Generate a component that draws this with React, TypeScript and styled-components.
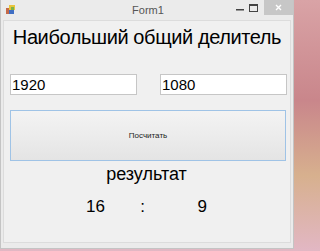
import styled, { createGlobalStyle } from "styled-components";

const GlobalStyle = createGlobalStyle`
  html, body {
    margin: 0;
    padding: 0;
  }
  body {
    width: 300px;
    height: 251px;
    overflow: hidden;
    background: linear-gradient(180deg, #d9a3a6 0%, #c9868b 40%, #d7b08e 70%, #e2b7c4 100%);
    font-family: "Liberation Sans", Arial, sans-serif;
  }
`;

const Window = styled.div`
  width: 294px;
  height: 249px;
  box-sizing: border-box;
  background: #ebebeb;
  border: 1px solid #c4c4c4;
  border-top: none;
  display: flex;
  flex-direction: column;
`;

const TitleBar = styled.div`
  height: 20px;
  display: flex;
  align-items: flex-start;
`;

const AppIcon = styled.svg`
  margin: 5px 0 0 5px;
`;

const Caption = styled.div`
  flex: 1;
  text-align: center;
  font-size: 11px;
  color: #555;
  line-height: 20px;
  padding-left: 47px;
`;

const Controls = styled.div`
  display: flex;
  align-items: flex-start;
  height: 16px;
`;

const CtrlButton = styled.div<{ $close?: boolean; $gap?: number }>`
  width: ${(p) => (p.$close ? "29px" : "11px")};
  height: ${(p) => (p.$close ? "15px" : "16px")};
  display: flex;
  align-items: center;
  justify-content: center;
  background: ${(p) => (p.$close ? "#c7c7c7" : "transparent")};
  margin-left: ${(p) => p.$gap ?? 0}px;
`;

const Client = styled.div`
  flex: 1;
  margin: 0 2px 5px 2px;
  background: #f0f0f0;
  border: 1px solid #dcdcdc;
  display: flex;
  flex-direction: column;
  padding: 0 3px 0 6px;
`;

const Heading = styled.div`
  font-size: 20px;
  letter-spacing: -0.4px;
  white-space: nowrap;
  color: #000;
  text-align: center;
  margin-top: 5px;
  line-height: 23px;
  padding-right: 3px;
`;

const InputRow = styled.div`
  display: flex;
  justify-content: space-between;
  margin-top: 25px;
`;

const NumberBox = styled.div`
  width: 127px;
  height: 21px;
  box-sizing: border-box;
  background: #fff;
  border: 1px solid #c6c6c6;
  font-size: 15px;
  line-height: 19px;
  padding-left: 1px;
  color: #000;
`;

const CalcButton = styled.div`
  margin-top: 15px;
  margin-right: 1px;
  height: 51px;
  box-sizing: border-box;
  border: 1px solid #9fc3e6;
  background: linear-gradient(180deg, #f3f3f3 0%, #ececec 50%, #e4e4e4 100%);
  display: flex;
  align-items: center;
  justify-content: center;
  font-size: 8px;
  color: #222;
`;

const ResultLabel = styled.div`
  font-size: 18px;
  text-align: center;
  margin-top: 2px;
  line-height: 22px;
  padding-right: 4px;
`;

const Ratio = styled.div`
  display: grid;
  grid-template-columns: 30px 53px 38px;
  margin-top: 11px;
  padding-left: 76px;
  font-size: 17px;
  line-height: 22px;
`;

const Cell = styled.span<{ $align: "left" | "center" | "right" }>`
  text-align: ${(p) => p.$align};
`;

export default function App() {
  return (
    <>
      <GlobalStyle />
      <Window>
        <TitleBar>
          <AppIcon width="9" height="9" viewBox="0 0 9 9">
            <rect x="0" y="3" width="5" height="6" fill="#c46a4a" />
            <rect x="3" y="0" width="6" height="5" fill="#e8c43a" />
            <rect x="3" y="5" width="5" height="4" fill="#3f6fc4" />
            <rect x="5" y="2" width="3" height="3" fill="#7bb34a" />
          </AppIcon>
          <Caption>Form1</Caption>
          <Controls>
            <CtrlButton>
              <svg width="8" height="8" viewBox="0 0 8 8">
                <rect x="0" y="5" width="8" height="1.5" fill="#444" />
              </svg>
            </CtrlButton>
            <CtrlButton $gap={3}>
              <svg width="9" height="8" viewBox="0 0 9 8">
                <rect x="0.5" y="0.5" width="8" height="7" fill="none" stroke="#444" />
                <rect x="0.5" y="0.5" width="8" height="1.5" fill="#444" />
              </svg>
            </CtrlButton>
            <CtrlButton $close $gap={5}>
              <svg width="7" height="7" viewBox="0 0 7 7">
                <path d="M1 1L6 6M6 1L1 6" stroke="#fff" strokeWidth="1.4" />
              </svg>
            </CtrlButton>
          </Controls>
        </TitleBar>
        <Client>
          <Heading>Наибольший общий делитель</Heading>
          <InputRow>
            <NumberBox>1920</NumberBox>
            <NumberBox>1080</NumberBox>
          </InputRow>
          <CalcButton>Посчитать</CalcButton>
          <ResultLabel>результат</ResultLabel>
          <Ratio>
            <Cell $align="left">16</Cell>
            <Cell $align="center">:</Cell>
            <Cell $align="right">9</Cell>
          </Ratio>
        </Client>
      </Window>
    </>
  );
}
